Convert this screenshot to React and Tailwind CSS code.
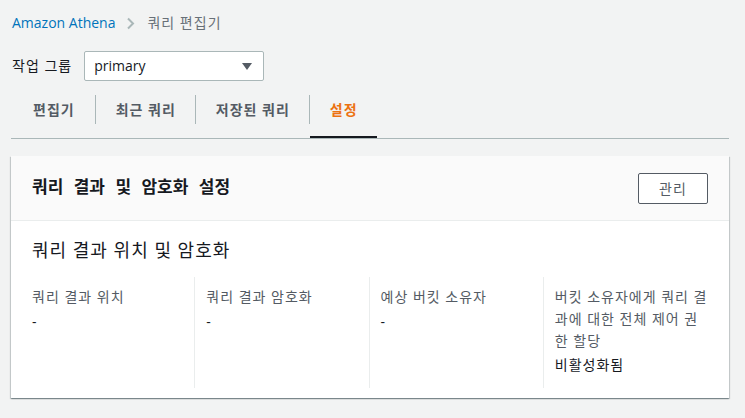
import { useState } from "react";

const font = "font-['Open_Sans','Noto_Sans_CJK_KR',sans-serif]";

const tabs = ["편집기", "최근 쿼리", "저장된 쿼리", "설정"];

const columns = [
  { label: "쿼리 결과 위치", value: "-" },
  { label: "쿼리 결과 암호화", value: "-" },
  { label: "예상 버킷 소유자", value: "-" },
  { label: "버킷 소유자에게 쿼리 결과에 대한 전체 제어 권한 할당", value: "비활성화됨" },
];

export default function App() {
  const [active, setActive] = useState(3);

  return (
    <div className={`min-h-screen bg-[#f2f3f3] pl-[11px] pr-[16px] pt-[13px] ${font} text-[#16191f]`}>
      {/* breadcrumb */}
      <nav className="flex items-center h-[20px] pl-px text-[14px] leading-[20px]">
        <a href="#" className="text-[#0073bb]">Amazon Athena</a>
        <svg className="mx-[11px]" width="10" height="13" viewBox="0 0 10 13" fill="none">
          <path d="M2 1.5l5 5-5 5" stroke="#aab7b8" strokeWidth="2" />
        </svg>
        <span className="text-[#687078] tracking-[1px]">쿼리 편집기</span>
      </nav>

      {/* workgroup */}
      <div className="flex items-center mt-[18px] pl-px">
        <span className="text-[14px] leading-[20px] tracking-[1px] mr-[12px]">작업 그룹</span>
        <div className="flex items-center justify-between w-[180px] h-[30px] bg-white border border-[#aab7b8] rounded-[2px] pl-[9px] pr-[11px]">
          <span className="text-[14px] leading-[20px]">primary</span>
          <svg width="10" height="7" viewBox="0 0 10 7">
            <path d="M0 0h10L5 7z" fill="#545b64" />
          </svg>
        </div>
      </div>

      {/* tabs */}
      <div className="flex items-stretch h-[58px] border-b border-[#aab7b8]">
        {tabs.map((t, i) => (
          <div key={t} className="flex items-center">
            {i > 0 && <div className="w-px h-[29px] bg-[#aab7b8]" />}
            <button
              onClick={() => setActive(i)}
              className={`h-full pt-[2px] text-[14px] leading-[20px] font-bold tracking-[1px] border-b-2 ${
                active === i ? "text-[#ec7211] border-[#16191f]" : "text-[#545b64] border-transparent"
              } ${i === 0 ? "pl-[22px] pr-[20px]" : "pl-[20px] pr-[19px]"}`}
            >
              {t}
            </button>
          </div>
        ))}
      </div>

      {/* card */}
      <div className="mt-[17px] bg-white shadow-[0_1px_1px_0_rgba(0,28,36,0.3),1px_1px_1px_0_rgba(0,28,36,0.15),-1px_1px_1px_0_rgba(0,28,36,0.15)]">
        <div className="flex items-center justify-between h-[65px] bg-[#fafafa] border-b border-[#eaeded] pl-[21px] pr-[21px]">
          <h2 className="text-[17px] leading-[22px] font-bold [word-spacing:6px] -mt-[3px]">
            쿼리 결과 및 암호화 설정
          </h2>
          <button className="w-[70px] h-[31px] border border-[#545b64] rounded-[2px] bg-white text-[14px] tracking-[1px] text-[#545b64]">
            관리
          </button>
        </div>

        <div className="pl-[9px] pt-[17px] pb-[10px]">
          <h3 className="pl-[12px] text-[18px] leading-[24px] tracking-[1px]">쿼리 결과 위치 및 암호화</h3>
          <div className="grid grid-cols-4 w-[697px] mt-[15px]">
            {columns.map((c, i) => (
              <div
                key={c.label}
                className={`pt-[9px] pb-[12px] pr-[8px] ${i === 0 ? "pl-[12px]" : "pl-[11px] border-l border-[#eaeded]"}`}
              >
                <div className="text-[14px] leading-[22px] tracking-[1px] text-[#545b64] mb-[2px]">{c.label}</div>
                <div className={`text-[14px] leading-[22px] tracking-[1px] ${c.value === "-" ? "mt-[3px]" : ""}`}>
                  {c.value}
                </div>
              </div>
            ))}
          </div>
        </div>
      </div>
    </div>
  );
}
